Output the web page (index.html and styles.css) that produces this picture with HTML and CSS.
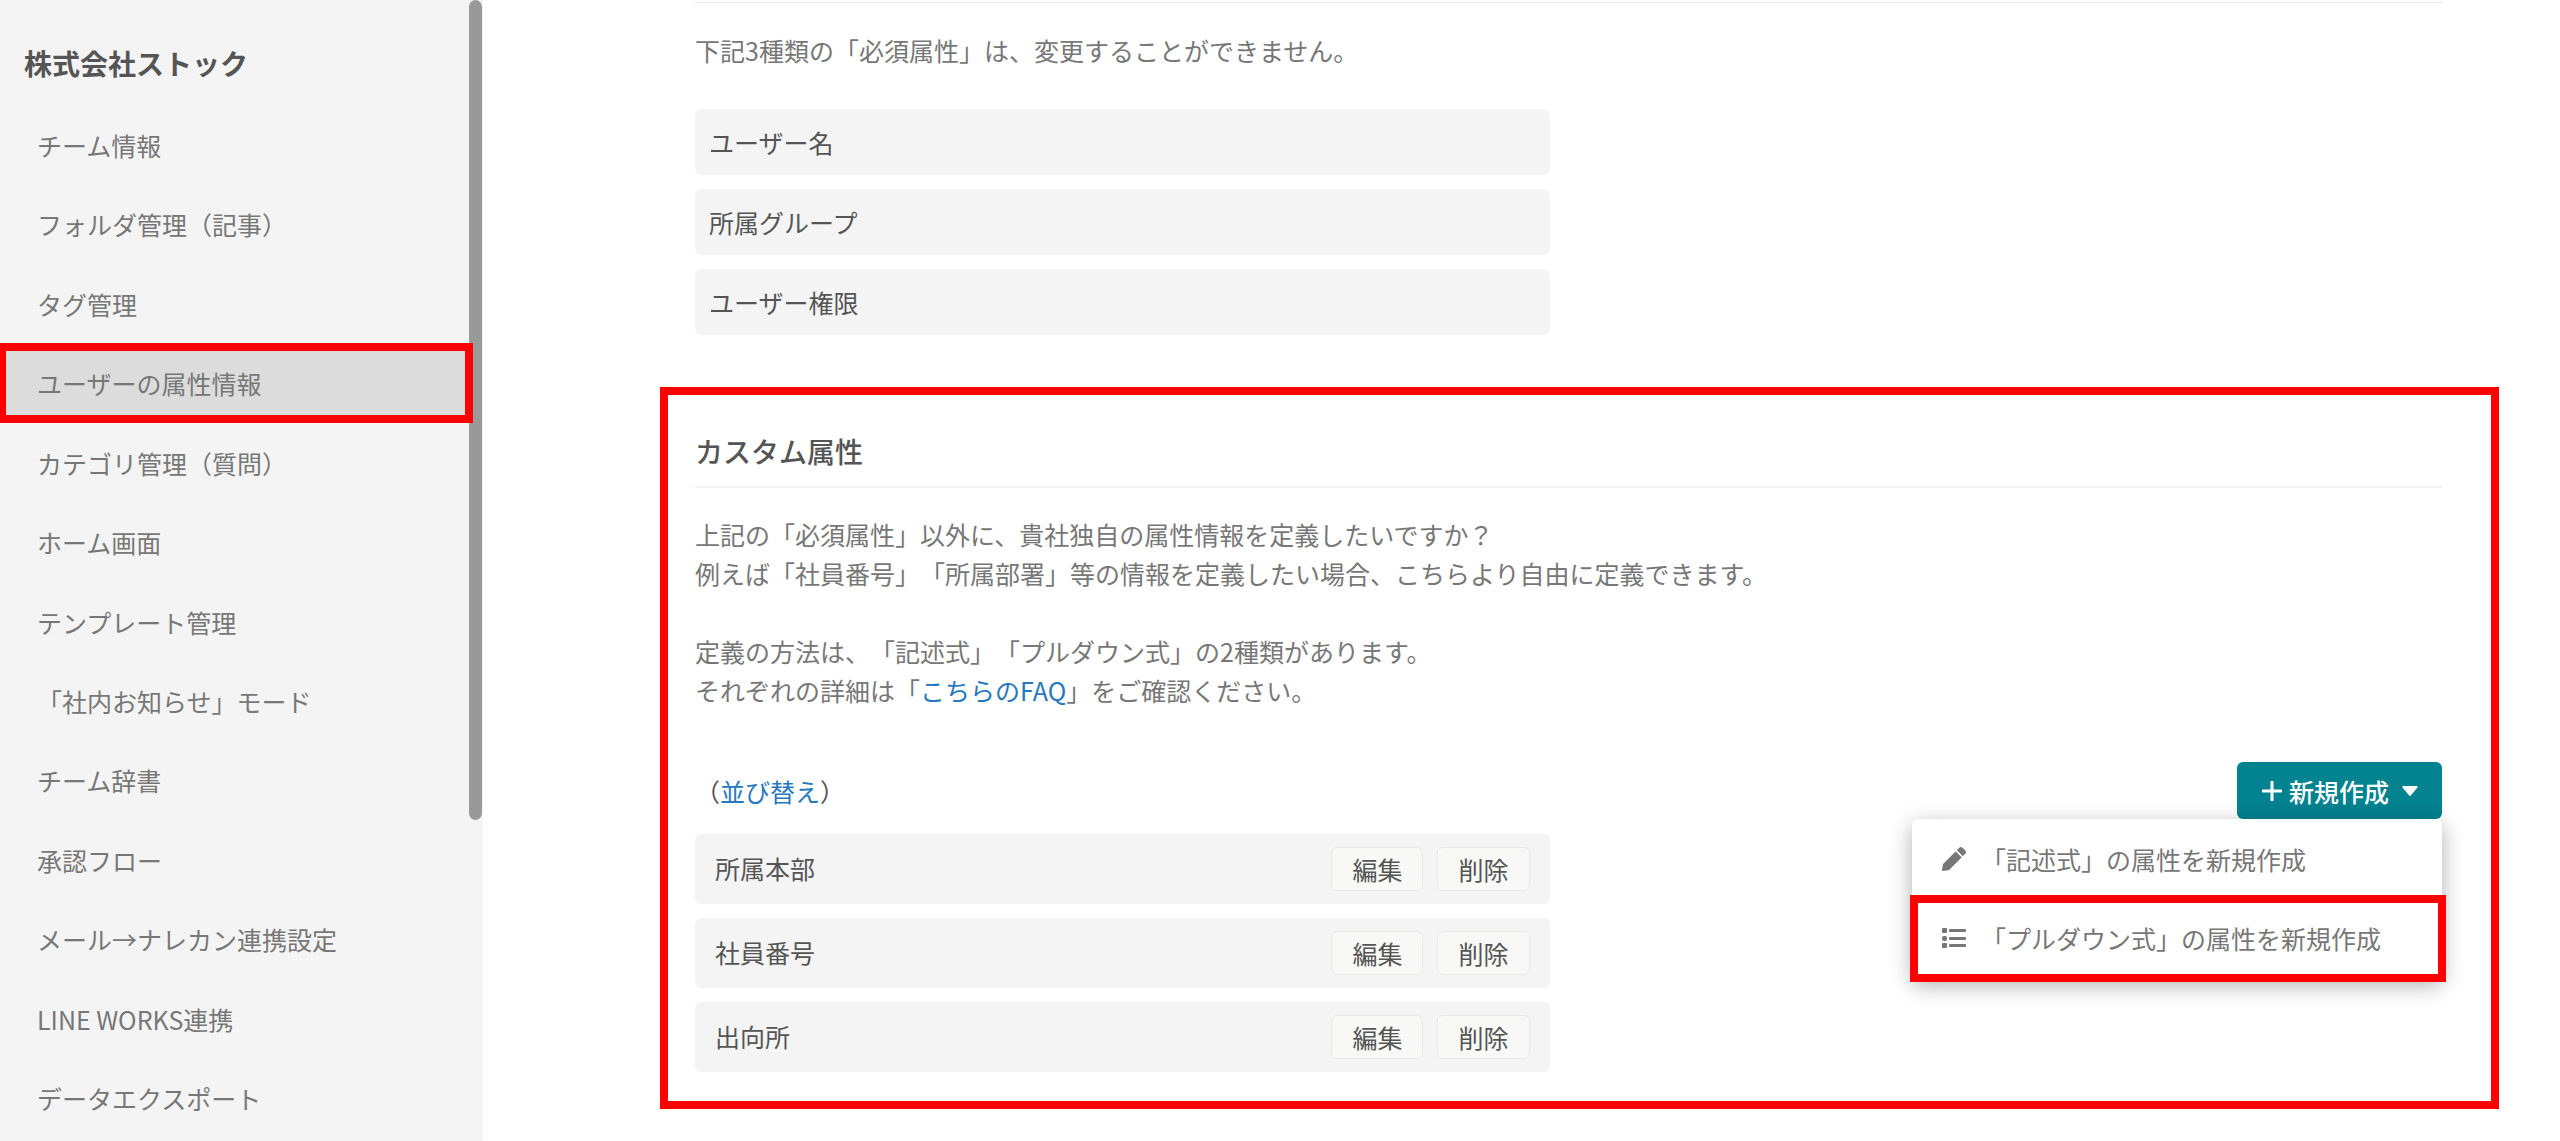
FILE: index.html
```html
<!DOCTYPE html>
<html lang="ja">
<head>
    <meta charset="UTF-8">
    <meta name="viewport" content="width=device-width, initial-scale=1.0">
    <title>ユーザーの属性情報</title>
    <link rel="stylesheet" href="styles.css">
</head>
<body>
    <div class="layout">
        <aside class="sidebar">
            <h1 class="team-name">株式会社ストック</h1>
            <nav class="side-nav">
                <a href="#">チーム情報</a>
                <a href="#">フォルダ管理（記事）</a>
                <a href="#">タグ管理</a>
                <a href="#" class="active">ユーザーの属性情報</a>
                <a href="#">カテゴリ管理（質問）</a>
                <a href="#">ホーム画面</a>
                <a href="#">テンプレート管理</a>
                <a href="#">「社内お知らせ」モード</a>
                <a href="#">チーム辞書</a>
                <a href="#">承認フロー</a>
                <a href="#">メール→ナレカン連携設定</a>
                <a href="#">LINE WORKS連携</a>
                <a href="#">データエクスポート</a>
            </nav>
            <div class="scroll-thumb"></div>
        </aside>

        <main class="content">
            <section class="required">
                <p class="text">下記3種類の「必須属性」は、変更することができません。</p>
                <ul class="attr-list">
                    <li>ユーザー名</li>
                    <li>所属グループ</li>
                    <li>ユーザー権限</li>
                </ul>
            </section>

            <section class="custom">
                <h2 class="section-title">カスタム属性</h2>
                <p class="text">
                    上記の「必須属性」以外に、貴社独自の属性情報を定義したいですか？<br>
                    例えば「社員番号」「所属部署」等の情報を定義したい場合、こちらより自由に定義できます。<br>
                    <br>
                    定義の方法は、「記述式」「プルダウン式」の2種類があります。<br>
                    それぞれの詳細は「<a href="#">こちらのFAQ</a>」をご確認ください。
                </p>

                <div class="toolbar">
                    <div class="sort">（<a href="#">並び替え</a>）</div>
                    <div class="dropdown">
                        <button type="button" class="create-btn">
                            <svg class="plus" viewBox="0 0 20 20" width="20" height="20"><path d="M10 1v18M1 10h18" stroke="currentColor" stroke-width="3" stroke-linecap="round"/></svg>
                            新規作成
                            <svg class="caret" viewBox="0 0 16 10" width="16" height="10"><path d="M1 0h14q1 .5.5 1.500L8.800 9.500q-.8.800-1.600 0L.5 1.500Q0 .5 1 0z" fill="currentColor"/></svg>
                        </button>
                        <div class="menu">
                            <a href="#">
                                <svg viewBox="0 0 512 512" width="24" height="24"><path fill="currentColor" d="M498 142l-46 46c-5 5-12 5-17 0L324 77c-5-5-5-12 0-17l46-46c19-19 49-19 68 0l60 60c19 19 19 49 0 68zM284 100L22 362 0 485c-3 16 11 30 27 27l123-21 262-262c5-5 5-12 0-17L301 100c-5-5-12-5-17 0z"/></svg>
                                「記述式」の属性を新規作成
                            </a>
                            <a href="#" class="marked">
                                <svg viewBox="0 0 24 24" width="24" height="24"><g fill="currentColor"><rect x="0" y="2" width="5" height="5" rx="1"/><rect x="0" y="10" width="5" height="5" rx="2"/><rect x="0" y="17" width="5" height="5" rx="1"/><rect x="7" y="3" width="17" height="3" rx="1"/><rect x="7" y="11" width="17" height="3" rx="1"/><rect x="7" y="18" width="17" height="3" rx="1"/></g></svg>
                                「プルダウン式」の属性を新規作成
                            </a>
                        </div>
                    </div>
                </div>

                <ul class="attr-list editable">
                    <li>
                        <span>所属本部</span>
                        <button type="button">編集</button>
                        <button type="button">削除</button>
                    </li>
                    <li>
                        <span>社員番号</span>
                        <button type="button">編集</button>
                        <button type="button">削除</button>
                    </li>
                    <li>
                        <span>出向所</span>
                        <button type="button">編集</button>
                        <button type="button">削除</button>
                    </li>
                </ul>
            </section>
        </main>
    </div>
</body>
</html>
```

FILE: styles.css
```css
* {
    margin: 0;
    padding: 0;
    box-sizing: border-box;
}

body {
    font-family: "Noto Sans CJK JP", sans-serif;
    font-size: 25px;
    line-height: 38px;
    color: #555;
    background-color: #fff;
    text-spacing-trim: space-all;
}

a {
    color: #2878be;
    text-decoration: none;
}

button {
    font: inherit;
    cursor: pointer;
}

ul {
    list-style: none;
}

.layout {
    display: flex;
    height: 100vh;
    overflow: hidden;
}

/* Sidebar */
.sidebar {
    position: relative;
    flex: 0 0 483px;
    display: flex;
    flex-direction: column;
    background-color: #f4f4f4;
}

.team-name {
    padding: 42px 24px 21px;
    font-size: 28px;
    line-height: 42px;
    font-weight: 700;
}

.side-nav {
    flex: 1;
    display: flex;
    flex-direction: column;
    padding-bottom: 3px;
}

.side-nav a {
    flex: 1;
    display: flex;
    align-items: center;
    padding-left: 37px;
    color: #777;
}

.side-nav .active {
    position: relative;
    background-color: #dcdcdc;
    z-index: 1;
    margin-right: 14px;
}

.side-nav .active::after {
    content: "";
    position: absolute;
    inset: 0 -4px 0 -2px;
    border: 8px solid #f00;
}

.scroll-thumb {
    position: absolute;
    top: 0;
    right: 1px;
    width: 13px;
    height: 820px;
    border-radius: 7px;
    background-color: #999;
}

/* Main column */
.content {
    flex: 1;
    padding: 2px 61px 0 177px;
}

.text {
    line-height: 39px;
    color: #777;
}

.required {
    margin: 0 57px 0 35px;
    padding-top: 28px;
    border-top: 1px solid #e5e5e5;
}

.attr-list {
    display: flex;
    flex-direction: column;
    gap: 14px;
    width: calc(50% - 19px);
}

.attr-list li {
    display: flex;
    align-items: center;
    gap: 14px;
    height: 66px;
    padding: 0 14px;
    border-radius: 6px;
    background-color: #f4f4f4;
}

.required .attr-list {
    margin-top: 39px;
}

.custom {
    margin-top: 52px;
    padding: 31px 49px 29px 27px;
    border: 8px solid #f00;
}

.section-title {
    padding-bottom: 10px;
    margin-bottom: 27px;
    border-bottom: 2px solid #f2f2f2;
    font-size: 28px;
    line-height: 50px;
    font-weight: 500;
}

.toolbar {
    display: flex;
    justify-content: space-between;
    align-items: center;
    margin: 52px 0 15px;
}

.dropdown {
    position: relative;
}

.create-btn {
    display: flex;
    align-items: center;
    height: 57px;
    padding: 0 24px 0 25px;
    border: none;
    border-radius: 6px;
    background-color: #03828f;
    color: #fff;
    font-weight: 500;
}

.create-btn .plus {
    margin-right: 7px;
}

.create-btn .caret {
    margin-left: 13px;
}

.menu {
    position: absolute;
    top: 100%;
    right: 0;
    width: 530px;
    padding: 1px 0;
    border-radius: 6px;
    background-color: #fff;
    box-shadow: 0 6px 22px rgba(0, 0, 0, 0.32);
}

.menu a {
    position: relative;
    display: flex;
    align-items: center;
    gap: 15px;
    height: 79px;
    padding: 0 0 1px 30px;
    color: #777;
}

.menu .marked::after {
    content: "";
    position: absolute;
    inset: -4px -4px -4px -2px;
    border: 8px solid #f00;
}

.editable li {
    height: 70px;
    padding: 0 20px;
}

.editable span {
    flex: 1;
    padding-bottom: 2px;
}

.editable button {
    height: 44px;
    padding: 0 20px;
    border: 1px solid #e8e8e8;
    border-radius: 6px;
    background-color: #f8f8f6;
    color: #555;
}
```
